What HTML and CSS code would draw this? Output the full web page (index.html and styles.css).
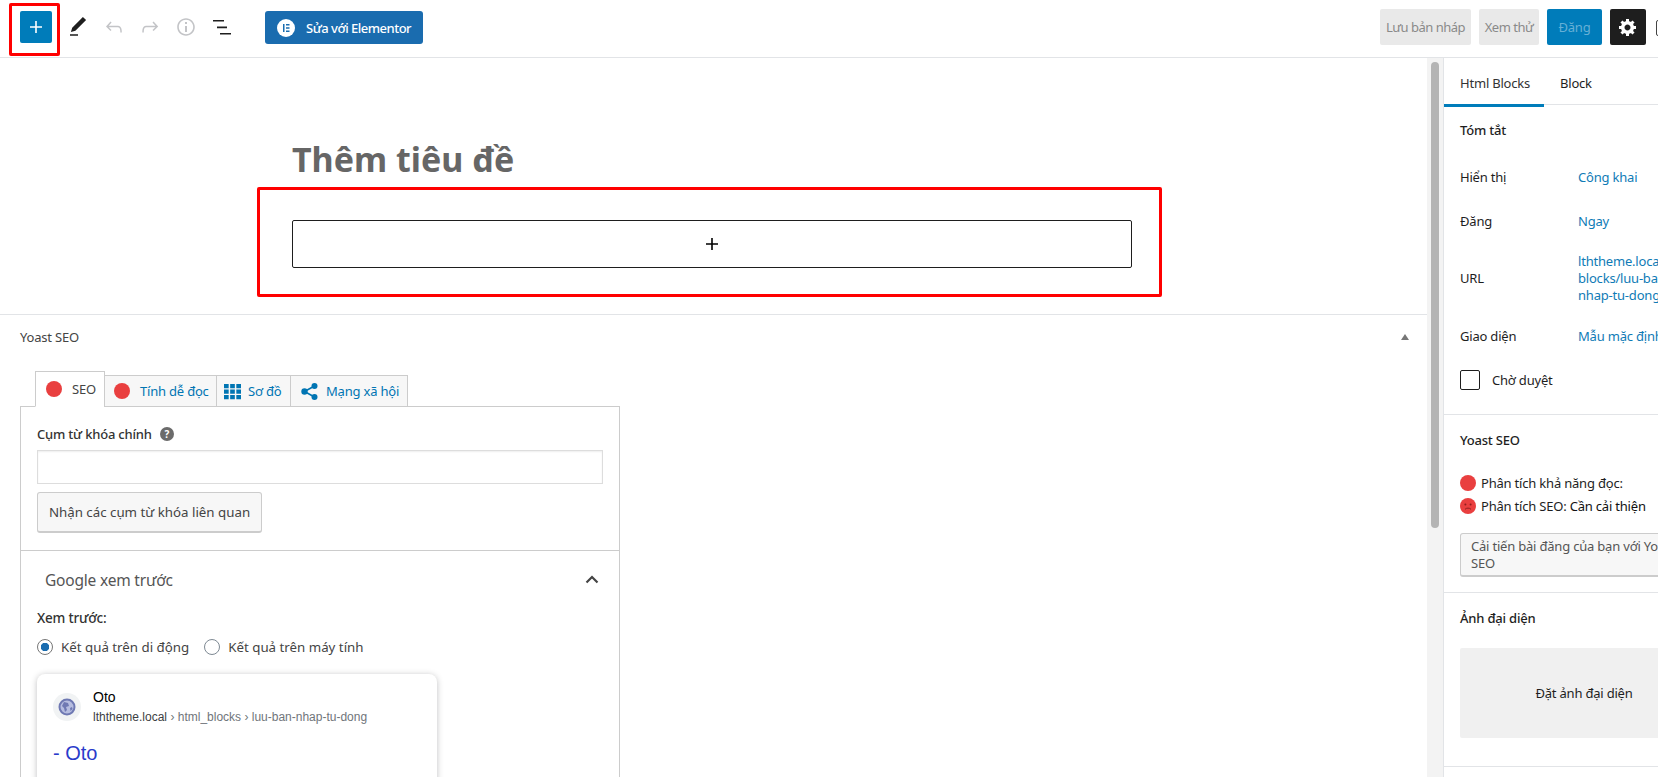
FILE: index.html
```html
<!DOCTYPE html>
<html lang="vi">
<head>
    <meta charset="UTF-8">
    <title>Thêm bài viết</title>
    <link rel="stylesheet" href="styles.css">
</head>
<body>

    <header class="topbar">
        <div class="tools">
            <button class="inserter" type="button">
                <svg width="24" height="24" viewBox="0 0 24 24"><path d="M18 11.2h-5.2V6h-1.6v5.2H6v1.6h5.2V18h1.6v-5.2H18z"/></svg>
            </button>
            <svg class="tool tool-dark" width="24" height="24" viewBox="0 0 24 24"><path d="M20.1 5.1L16.9 2 6.2 12.7l-1.3 4.4 4.5-1.3L20.1 5.1zM4 20.8h8v-1.5H4v1.5z"/></svg>
            <svg class="tool" width="24" height="24" viewBox="0 0 24 24"><path d="M18.3 11.7c-.6-.6-1.4-.9-2.3-.9H6.7l2.9-3.3-1.1-1-4.5 5L8.5 16l1-1-2.7-2.7H16c.5 0 .9.2 1.3.5 1 1 1 3.4 1 4.5v.3h1.5v-.2c0-1.5 0-4.3-1.5-5.7z"/></svg>
            <svg class="tool" width="24" height="24" viewBox="0 0 24 24"><path d="M15.6 6.5l-1.1 1 2.9 3.3H8c-.9 0-1.7.3-2.3.9-1.4 1.5-1.4 4.2-1.4 5.6v.2h1.5v-.3c0-1.1 0-3.5 1-4.5.3-.3.7-.5 1.3-.5h9.2L14.5 15l1.1 1.1 4.6-4.6-4.6-5z"/></svg>
            <svg class="tool" width="24" height="24" viewBox="0 0 24 24"><path d="M12 3.2c-4.8 0-8.8 3.9-8.8 8.8 0 4.8 3.9 8.8 8.8 8.8 4.8 0 8.8-3.9 8.8-8.8 0-4.8-4-8.8-8.8-8.8zm0 16c-4 0-7.2-3.3-7.2-7.2C4.8 8 8 4.8 12 4.8s7.2 3.3 7.2 7.2c0 4-3.2 7.2-7.2 7.2zM11 17h2v-6h-2v6zm0-8h2V7h-2v2z"/></svg>
            <svg class="tool tool-dark" width="24" height="24" viewBox="0 0 24 24"><path d="M3 5h11v1.6H3zM7 11.6h10v1.6H7zM10 18h11v1.6H10z"/></svg>
            <button class="elementor" type="button">
                <svg width="18" height="18" viewBox="0 0 18 18"><circle cx="9" cy="9" r="9" fill="#fff"/><path fill="#1a6caf" d="M6 5h1.5v8H6zM9 5h3.5v1.5H9zM9 8.2h3.5v1.5H9zM9 11.5h3.5V13H9z"/></svg>
                Sửa với Elementor
            </button>
        </div>
        <div class="actions">
            <button class="ghost draft" type="button">Lưu bản nháp</button>
            <button class="ghost preview" type="button">Xem thử</button>
            <button class="publish" type="button">Đăng</button>
            <button class="settings" type="button">
                <svg width="20" height="20" viewBox="0 0 20 20"><path d="M18 12h-2.18c-.17.7-.44 1.35-.81 1.93l1.54 1.54-2.1 2.1-1.54-1.54c-.58.36-1.23.63-1.91.79V19H8v-2.18c-.68-.16-1.33-.43-1.91-.79l-1.54 1.54-2.12-2.12 1.54-1.54c-.36-.58-.63-1.23-.79-1.91H1V9.03h2.17c.16-.7.44-1.35.8-1.94L2.43 5.55l2.1-2.1 1.54 1.54c.58-.37 1.24-.64 1.93-.81V2h3v2.18c.68.16 1.33.43 1.91.79l1.54-1.54 2.12 2.12-1.54 1.54c.36.59.64 1.24.8 1.94H18V12zm-8.5 1.5c1.66 0 3-1.34 3-3s-1.34-3-3-3-3 1.34-3 3 1.34 3 3 3z"/></svg>
            </button>
            <span class="more-box"></span>
        </div>
    </header>

    <div class="workspace">
        <main class="editor">
            <section class="canvas">
                <h1 class="post-title">Thêm tiêu đề</h1>
                <div class="add-block">
                    <svg width="24" height="24" viewBox="0 0 24 24"><path d="M18 11.2h-5.2V6h-1.6v5.2H6v1.6h5.2V18h1.6v-5.2H18z"/></svg>
                </div>
            </section>

            <section class="metabox">
                <div class="metabox-head">
                    <span>Yoast SEO</span>
                    <i class="caret-up"></i>
                </div>

                <div class="seo-tabs">
                    <div class="seo-tab active"><i class="dot"></i>SEO</div>
                    <div class="seo-tab"><i class="dot"></i>Tính dễ đọc</div>
                    <div class="seo-tab">
                        <svg width="17" height="17" viewBox="0 0 16 16"><path fill="#0075b3" d="M0 1h4.4v4H0zM5.8 1h4.4v4H5.8zM11.6 1H16v4h-4.4zM0 6.2h4.4v4H0zM5.8 6.2h4.4v4H5.8zM11.6 6.2H16v4h-4.4zM0 11.4h4.4v4H0zM5.8 11.4h4.4v4H5.8zM11.6 11.4H16v4h-4.4z"/></svg>
                        Sơ đồ
                    </div>
                    <div class="seo-tab">
                        <svg width="17" height="17" viewBox="0 0 17 17"><g fill="#0075b3"><circle cx="3.5" cy="8.5" r="3.2"/><circle cx="13.5" cy="3" r="3"/><circle cx="13.5" cy="14" r="3"/></g><path stroke="#0075b3" stroke-width="1.6" d="M3.5 8.5L13.5 3M3.5 8.5l10 5.5"/></svg>
                        Mạng xã hội
                    </div>
                </div>

                <div class="seo-panel">
                    <div class="keyword">
                        <label class="field-label">Cụm từ khóa chính <i class="help">?</i></label>
                        <input class="keyword-input" type="text">
                        <button class="related" type="button">Nhận các cụm từ khóa liên quan</button>
                    </div>

                    <div class="snippet">
                        <div class="snippet-head">
                            <span>Google xem trước</span>
                            <svg width="14" height="9" viewBox="0 0 14 9"><path fill="none" stroke="#444" stroke-width="2.2" d="M1.5 7.5L7 2l5.5 5.5"/></svg>
                        </div>
                        <div class="field-label preview-label">Xem trước:</div>
                        <div class="radios">
                            <span class="radio-item"><i class="radio checked"></i>Kết quả trên di động</span>
                            <span class="radio-item"><i class="radio"></i>Kết quả trên máy tính</span>
                        </div>
                        <div class="serp">
                            <div class="serp-site">
                                <span class="favicon">
                                    <svg width="18" height="18" viewBox="0 0 18 18"><circle cx="9" cy="9" r="7.5" fill="#b6bde0" stroke="#6f79b3" stroke-width="2"/><path fill="#6f79b3" d="M6 4l4 1 1 3-3 1 1 3-2 2-1-4-2-2zM12 10l2-1 .5 2-2 2z"/></svg>
                                </span>
                                <div>
                                    <div class="serp-name">Oto</div>
                                    <div class="serp-url">lththeme.local <small>› html_blocks › luu-ban-nhap-tu-dong</small></div>
                                </div>
                            </div>
                            <div class="serp-title">- Oto</div>
                        </div>
                    </div>
                </div>
            </section>
        </main>

        <div class="scrollbar"><div class="thumb"></div></div>

        <aside class="sidebar">
            <div class="side-tabs">
                <div class="side-tab active">Html Blocks</div>
                <div class="side-tab">Block</div>
            </div>

            <div class="panel summary">
                <h3>Tóm tắt</h3>
                <div class="row row-1"><span>Hiển thị</span><a>Công khai</a></div>
                <div class="row row-2"><span>Đăng</span><a>Ngay</a></div>
                <div class="row row-3"><span>URL</span><a>lththeme.local/html-<br>blocks/luu-ban-<br>nhap-tu-dong</a></div>
                <div class="row row-4"><span>Giao diện</span><a>Mẫu mặc định</a></div>
                <label class="pending"><i class="checkbox"></i>Chờ duyệt</label>
            </div>

            <div class="panel yoast">
                <h3>Yoast SEO</h3>
                <div class="score"><i class="dot"></i>Phân tích khả năng đọc:</div>
                <div class="score">
                    <svg width="16" height="16" viewBox="0 0 16 16"><circle cx="8" cy="8" r="8" fill="#e93f3f"/><circle cx="5.4" cy="6.4" r="1" fill="#8f1f1f"/><circle cx="10.6" cy="6.4" r="1" fill="#8f1f1f"/><path fill="none" stroke="#8f1f1f" stroke-width="1" d="M5 11.3c1.6-1.6 4.4-1.6 6 0"/></svg>
                    <span>Phân tích SEO: <b>Cần cải thiện</b></span>
                </div>
                <button class="improve" type="button">Cải tiến bài đăng của bạn với Yoast SEO</button>
            </div>

            <div class="panel featured">
                <h3>Ảnh đại diện</h3>
                <div class="featured-box">Đặt ảnh đại diện</div>
            </div>
        </aside>
    </div>

    <div class="mark mark-inserter"></div>
    <div class="mark mark-block"></div>

</body>
</html>
```

FILE: styles.css
```css
* {
    box-sizing: border-box;
}
html, body {
    height: 777px;
    overflow: hidden;
}
body {
    margin: 0;
    position: relative;
    background: #fff;
    color: #1e1e1e;
    font-family: "Noto Sans", Arial, sans-serif;
    font-size: 13px;
    letter-spacing: -0.2px;
}
button {
    font-family: inherit;
    font-size: 13px;
    letter-spacing: inherit;
    border: none;
    padding: 0;
}
i {
    font-style: normal;
}

/* top bar */
.topbar {
    height: 58px;
    display: flex;
    justify-content: space-between;
    border-bottom: 1px solid #e2e4e7;
    white-space: nowrap;
}
.tools {
    display: flex;
    align-items: flex-start;
    padding: 11px 0 0 20px;
}
.inserter {
    width: 32px;
    height: 32px;
    margin-right: 14px;
    background: #007cba;
    border-radius: 2px;
    display: flex;
    align-items: center;
    justify-content: center;
}
.inserter svg {
    fill: #fff;
}
.tool {
    margin: 4px 12px 0 0;
    fill: #c3c4c7;
}
.tool-dark {
    fill: #1e1e1e;
}
.elementor {
    margin-left: 19px;
    width: 158px;
    height: 33px;
    background: #1a6caf;
    color: #fff;
    border-radius: 3px;
    font-weight: 500;
    letter-spacing: -0.5px;
    display: flex;
    align-items: center;
    gap: 11px;
    padding-left: 12px;
}
.actions {
    display: flex;
    align-items: flex-start;
    padding-top: 9px;
    margin-right: -18px;
}
.actions button {
    height: 36px;
    border-radius: 2px;
}
.ghost {
    background: #e9e9e9;
    color: #8a8a8a;
    letter-spacing: -0.5px;
}
.draft {
    width: 91px;
    margin-right: 8px;
}
.preview {
    width: 60px;
    margin-right: 8px;
}
.publish {
    width: 55px;
    margin-right: 8px;
    background: #007cba;
    color: #66b0d6;
}
.settings {
    width: 36px;
    background: #1e1e1e;
    display: flex;
    align-items: center;
    justify-content: center;
}
.settings svg {
    fill: #fff;
}
.more-box {
    width: 20px;
    height: 16px;
    margin: 11px 0 0 10px;
    border: 1.5px solid #444;
    border-radius: 2px;
}

/* layout */
.workspace {
    display: flex;
    height: 719px;
    overflow: hidden;
}
.editor {
    width: 1427px;
    flex: none;
    overflow: hidden;
}
.scrollbar {
    width: 16px;
    flex: none;
    padding: 4px;
    background: #f3f3f3;
}
.thumb {
    height: 466px;
    background: #b4b4b4;
    border-radius: 4px;
}

/* title + block */
.canvas {
    height: 257px;
    padding: 81px 0 0 292px;
    border-bottom: 1px solid #e2e4e7;
}
.post-title {
    margin: 0 0 41px;
    font-size: 34px;
    line-height: 40px;
    font-weight: 700;
    color: #666;
    letter-spacing: 0;
}
.add-block {
    width: 840px;
    height: 48px;
    border: 1px solid #1e1e1e;
    border-radius: 2px;
    display: flex;
    align-items: center;
    justify-content: center;
}

/* yoast metabox */
.metabox {
    padding-left: 20px;
}
.metabox-head {
    height: 44px;
    display: flex;
    align-items: center;
    justify-content: space-between;
    padding-right: 16px;
    color: #444;
}
.caret-up {
    width: 0;
    height: 0;
    border-left: 4px solid transparent;
    border-right: 4px solid transparent;
    border-bottom: 6px solid #777;
    margin-right: 2px;
}
.seo-tabs {
    display: flex;
    align-items: flex-end;
    height: 36px;
    margin: 12px 0 -1px 15px;
    position: relative;
}
.seo-tab {
    height: 32px;
    display: flex;
    align-items: center;
    gap: 10px;
    padding-left: 9px;
    margin-left: -1px;
    background: #f7f7f7;
    border: 1px solid #ccc;
    color: #0075b3;
    white-space: nowrap;
}
.seo-tab svg {
    flex: none;
}
.seo-tab.active {
    height: 36px;
    width: 70px;
    margin-left: 0;
    background: #fff;
    border-bottom-color: #fff;
    color: #444;
    padding-left: 10px;
}
.seo-tab:nth-child(2) {
    width: 113px;
}
.seo-tab:nth-child(3) {
    width: 75px;
    gap: 7px;
    padding-left: 7px;
}
.seo-tab:nth-child(4) {
    width: 118px;
    gap: 8px;
    padding-left: 10px;
}
.dot {
    width: 16px;
    height: 16px;
    border-radius: 50%;
    background: #e93f3f;
    flex: none;
}
.seo-panel {
    width: 600px;
    border: 1px solid #ccc;
}
.keyword {
    height: 144px;
    padding: 17px 16px 0;
    border-bottom: 1px solid #ccc;
}
.field-label {
    display: block;
    line-height: 20px;
    font-weight: 500;
    color: #333;
}
.preview-label {
    font-size: 13.5px;
}
.help {
    display: inline-block;
    width: 14px;
    height: 14px;
    margin-left: 5px;
    border-radius: 50%;
    background: #6b6b6b;
    color: #fff;
    font-size: 10px;
    font-weight: 700;
    line-height: 14px;
    text-align: center;
    vertical-align: 1px;
}
.keyword-input {
    display: block;
    width: 566px;
    height: 34px;
    margin-top: 6px;
    border: 1px solid #ddd;
    box-shadow: inset 0 1px 2px rgba(0, 0, 0, 0.07);
}
.related {
    display: block;
    width: 225px;
    height: 41px;
    margin-top: 8px;
    background: #f7f7f7;
    border: 1px solid #ccc;
    border-bottom-width: 2px;
    border-radius: 3px;
    color: #444;
    font-size: 13.3px;
    letter-spacing: 0;
}
.snippet {
    padding: 0 16px;
}
.snippet-head {
    height: 57px;
    display: flex;
    align-items: center;
    justify-content: space-between;
    padding: 0 4px 0 8px;
    font-size: 15.5px;
    color: #555;
}
.radios {
    display: flex;
    gap: 15px;
    margin-top: 9px;
    font-size: 13.3px;
    letter-spacing: 0;
    line-height: 20px;
    color: #444;
}
.radio-item {
    display: flex;
    align-items: center;
    gap: 8px;
}
.radio {
    width: 16px;
    height: 16px;
    border: 1px solid #7e8993;
    border-radius: 50%;
}
.radio.checked {
    border-color: #777;
    background: radial-gradient(circle, #1a6caf 0 4px, #fff 4.5px);
}
.serp {
    width: 400px;
    height: 200px;
    margin-top: 17px;
    padding: 14px 16px;
    border-radius: 8px;
    box-shadow: 0 1px 6px rgba(32, 33, 36, 0.28);
    font-family: "Liberation Sans", Arial, sans-serif;
    letter-spacing: 0;
}
.serp-site {
    display: flex;
    gap: 12px;
    height: 40px;
}
.favicon {
    width: 28px;
    height: 28px;
    margin-top: 5px;
    border-radius: 50%;
    background: #f1f3f4;
    display: flex;
    align-items: center;
    justify-content: center;
}
.serp-name {
    font-size: 14px;
    line-height: 18px;
    color: #000;
}
.serp-url {
    font-size: 12px;
    line-height: 22px;
    color: #3c4043;
}
.serp-url small {
    font-size: 12px;
    color: #70757a;
}
.serp-title {
    margin-top: 12px;
    font-size: 20px;
    line-height: 26px;
    color: #2a3bcb;
}

/* sidebar */
.sidebar {
    width: 280px;
    flex: none;
    border-left: 1px solid #e2e4e7;
}
.side-tabs {
    display: flex;
    height: 47px;
    border-bottom: 1px solid #e2e4e7;
}
.side-tab {
    padding-top: 16px;
    margin-left: 16px;
    color: #1e1e1e;
}
.side-tab.active {
    width: 100px;
    height: 49px;
    margin-left: 0;
    padding-left: 16px;
    color: #333;
    border-bottom: 3px solid #007cba;
}
.panel {
    padding: 0 16px;
    border-bottom: 1px solid #e2e4e7;
}
.panel h3 {
    margin: 0;
    font-size: 13px;
    font-weight: 500;
    line-height: 20px;
}
.summary {
    height: 310px;
    padding-top: 15px;
}
.row {
    display: flex;
    align-items: center;
    line-height: 17px;
}
.row span {
    width: 118px;
    flex: none;
}
.row a {
    color: #0f7bb6;
    white-space: nowrap;
}
.row-1 {
    margin-top: 29px;
}
.row-2 {
    margin-top: 27px;
}
.row-3 {
    margin-top: 23px;
}
.row-4 {
    margin-top: 24px;
}
.pending {
    display: flex;
    align-items: center;
    gap: 12px;
    margin-top: 25px;
}
.checkbox {
    width: 20px;
    height: 20px;
    border: 1px solid #1e1e1e;
    border-radius: 2px;
}
.yoast {
    height: 178px;
    padding-top: 15px;
}
.score {
    display: flex;
    align-items: center;
    gap: 5px;
    height: 23px;
}
.yoast h3 {
    margin-bottom: 21px;
}
.score b {
    font-weight: 400;
    color: #111;
}
.improve {
    display: block;
    width: 248px;
    height: 44px;
    margin-top: 16px;
    padding: 0 10px;
    line-height: 17px;
    text-align: left;
    background: #f7f7f7;
    border: 1px solid #ccc;
    border-bottom-width: 2px;
    border-radius: 3px;
    color: #555;
}
.featured {
    height: 174px;
    padding-top: 15px;
}
.featured-box {
    width: 248px;
    height: 90px;
    margin-top: 20px;
    background: #f0f0f0;
    border-radius: 2px;
    display: flex;
    align-items: center;
    justify-content: center;
}

/* red callouts drawn over the screenshot */
.mark {
    position: absolute;
    border: 3px solid #f00;
    border-radius: 2px;
}
.mark-inserter {
    left: 9px;
    top: 3px;
    width: 51px;
    height: 53px;
}
.mark-block {
    left: 257px;
    top: 187px;
    width: 905px;
    height: 110px;
}
```
